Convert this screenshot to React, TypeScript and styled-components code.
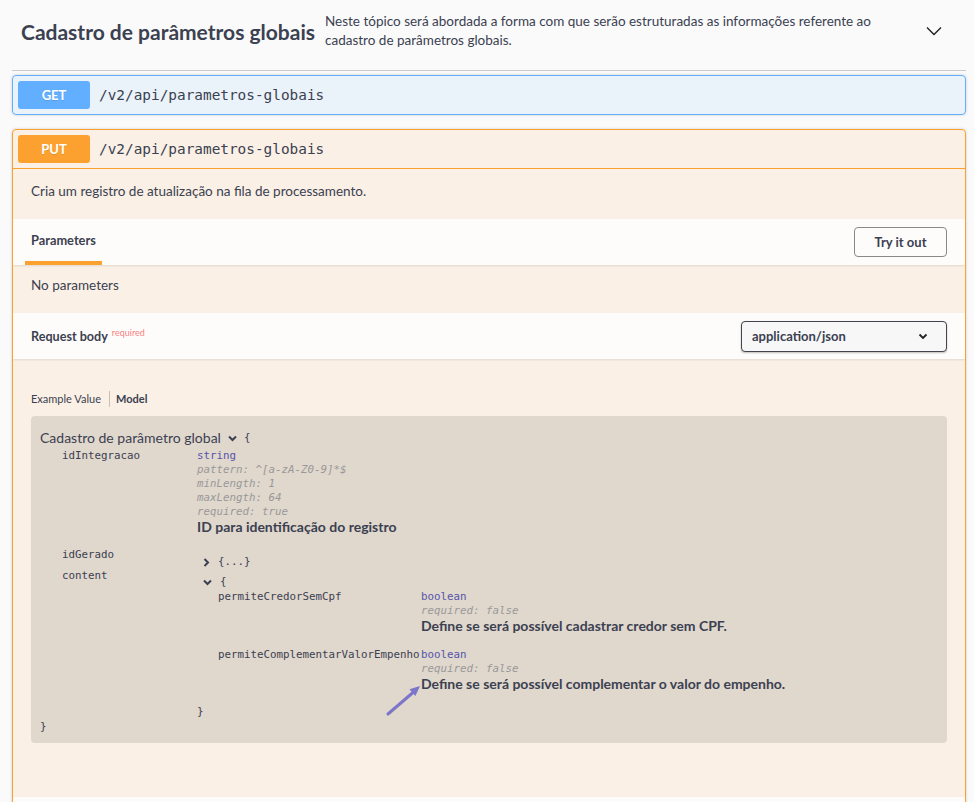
import styled, { createGlobalStyle } from 'styled-components';

const ui = `Lato, 'Noto Sans', sans-serif`;
const mono = `'DejaVu Sans Mono', 'Liberation Mono', monospace`;

const GlobalStyle = createGlobalStyle`
  body {
    margin: 0;
    background: #fafafa;
    font-family: ${ui};
    color: #3b4151;
  }
`;

const Page = styled.div`
  padding: 0 8px 0 12px;
`;

const TagHeader = styled.div`
  display: flex;
  align-items: center;
  height: 71px;
  box-sizing: border-box;
  padding: 0 24px 8px 9px;
  border-bottom: 1px solid rgba(59, 65, 81, 0.25);
`;

const TagTitle = styled.h3`
  margin: 0;
  font-size: 21px;
  font-weight: 700;
  white-space: nowrap;
`;

const TagDescription = styled.p`
  margin: 0 0 0 10px;
  flex: 1;
  font-size: 13.5px;
  line-height: 19px;
  max-width: 580px;
`;

const ExpandIcon = styled.svg`
  margin-left: auto;
  width: 16px;
  height: 10px;
`;

const OpBlock = styled.div<{ $color: string; $bg: string; $gap: number }>`
  margin-top: ${(p) => p.$gap}px;
  border: 1px solid ${(p) => p.$color};
  border-radius: 4px;
  background: ${(p) => p.$bg};
  box-shadow: 0 0 3px rgba(0, 0, 0, 0.19);
  overflow: hidden;
`;

const OpSummary = styled.div<{ $line?: string }>`
  display: flex;
  align-items: center;
  gap: 9px;
  padding: 5px;
  border-bottom: ${(p) => (p.$line ? `1px solid ${p.$line}` : 'none')};
`;

const MethodBadge = styled.span<{ $color: string }>`
  display: flex;
  align-items: center;
  justify-content: center;
  width: 72px;
  height: 28px;
  border-radius: 3px;
  background: ${(p) => p.$color};
  color: #fff;
  font-size: 13px;
  font-weight: 700;
  text-shadow: 0 1px 0 rgba(0, 0, 0, 0.1);
`;

const OpPath = styled.span`
  font-family: ${mono};
  font-size: 14.4px;
  color: #3b4151;
`;

const OpDescription = styled.p`
  margin: 0;
  padding: 12px 18px 18px;
  font-size: 13.5px;
  line-height: 20px;
`;

const SectionHeader = styled.div`
  display: flex;
  align-items: center;
  height: 46px;
  box-sizing: border-box;
  padding: 0 18px 0 12px;
  background: rgba(255, 255, 255, 0.8);
  box-shadow: 0 1px 2px rgba(0, 0, 0, 0.1);
`;

const SectionTab = styled.div`
  align-self: stretch;
  display: flex;
  align-items: center;
  padding: 0 6px;
  border-bottom: 4px solid #fca130;
  box-sizing: border-box;
  font-size: 12.8px;
  font-weight: 700;
`;

const SectionLabel = styled.div`
  padding-left: 6px;
  font-size: 12.6px;
  font-weight: 700;
`;

const Required = styled.sup`
  margin-left: 4px;
  font-size: 9px;
  font-weight: 400;
  color: rgba(249, 62, 62, 0.7);
`;

const TryButton = styled.button`
  margin-left: auto;
  width: 93px;
  height: 30px;
  border: 1px solid #888;
  border-radius: 4px;
  background: transparent;
  font-family: ${ui};
  font-size: 13px;
  font-weight: 700;
  color: #3b4151;
`;

const SelectBox = styled.div`
  margin-left: auto;
  display: flex;
  align-items: center;
  width: 206px;
  height: 31px;
  box-sizing: border-box;
  padding: 0 18px 0 10px;
  border: 1px solid #41444e;
  border-radius: 4px;
  background: #f7f7f7;
  box-shadow: 0 1px 2px rgba(0, 0, 0, 0.25);
  font-size: 13px;
  font-weight: 700;

  svg {
    margin-left: auto;
  }
`;

const Plain = styled.p`
  margin: 0;
  padding: 10px 18px 18px;
  font-size: 13.5px;
  line-height: 20px;
`;

const BodyArea = styled.div`
  padding: 32px 18px 54px;
`;

const ModelTabs = styled.div`
  display: flex;
  align-items: center;
  font-size: 11px;
  line-height: 16px;
  margin-bottom: 9px;
`;

const ModelTab = styled.span<{ $active?: boolean; $divider?: boolean }>`
  padding: 0 ${(p) => (p.$divider ? 0 : 8)}px 0 ${(p) => (p.$divider ? 6 : 0)}px;
  border-left: ${(p) => (p.$divider ? '1px solid rgba(0, 0, 0, 0.2)' : 'none')};
  font-weight: ${(p) => (p.$active ? 700 : 400)};
`;

const ModelBox = styled.div`
  position: relative;
  padding: 13px 9px 9px;
  border-radius: 4px;
  background: rgba(0, 0, 0, 0.1);
`;

const ModelTitle = styled.div`
  display: flex;
  align-items: center;
  gap: 7px;
  font-size: 14px;
  line-height: 18px;
`;

const Line = styled.div<{ $tone?: 'type' | 'meta' }>`
  font-family: ${mono};
  font-size: 10.8px;
  line-height: 14px;
  white-space: nowrap;
  color: ${(p) => (p.$tone === 'type' ? '#55a' : p.$tone === 'meta' ? '#999' : '#3b4151')};
  font-style: ${(p) => (p.$tone === 'meta' ? 'italic' : 'normal')};
`;

const Desc = styled.div`
  font-size: 14px;
  font-weight: 700;
  line-height: 16px;
  white-space: nowrap;
`;

const PropRow = styled.div<{ $nameWidth: number; $gap: number }>`
  display: grid;
  grid-template-columns: ${(p) => p.$nameWidth}px 1fr;
  margin-top: ${(p) => p.$gap}px;
`;

const PropList = styled.div<{ $indent: number }>`
  padding-left: ${(p) => p.$indent}px;
`;

const Toggle = styled.div<{ $top: number }>`
  display: flex;
  align-items: center;
  gap: 8px;
  padding: ${(p) => p.$top}px 0 0 6px;
`;

const Brace = styled(Line)<{ $gap: number }>`
  margin-top: ${(p) => p.$gap}px;
`;

const Arrow = styled.svg`
  position: absolute;
  left: 352px;
  top: 264px;
  width: 44px;
  height: 40px;
`;

function Chevron({ dir }: { dir: 'down' | 'right' }) {
  return dir === 'down' ? (
    <svg width="9" height="7" viewBox="0 0 9 7">
      <polyline points="1,1.5 4.5,5 8,1.5" fill="none" stroke="#3b4151" strokeWidth="2" />
    </svg>
  ) : (
    <svg width="7" height="9" viewBox="0 0 7 9">
      <polyline points="1.5,1 5,4.5 1.5,8" fill="none" stroke="#3b4151" strokeWidth="2" />
    </svg>
  );
}

type Prop = { name: string; type: string; meta: string[]; desc: string };

function PropValue({ type, meta, desc }: Omit<Prop, 'name'>) {
  return (
    <div>
      <Line $tone="type">{type}</Line>
      {meta.map((m) => (
        <Line key={m} $tone="meta">
          {m}
        </Line>
      ))}
      <Desc>{desc}</Desc>
    </div>
  );
}

const nested: Prop[] = [
  {
    name: 'permiteCredorSemCpf',
    type: 'boolean',
    meta: ['required: false'],
    desc: 'Define se será possível cadastrar credor sem CPF.',
  },
  {
    name: 'permiteComplementarValorEmpenho',
    type: 'boolean',
    meta: ['required: false'],
    desc: 'Define se será possível complementar o valor do empenho.',
  },
];

function Model() {
  return (
    <ModelBox>
      <ModelTitle>
        Cadastro de parâmetro global
        <Chevron dir="down" />
        <Line>{'{'}</Line>
      </ModelTitle>
      <PropList $indent={22}>
        <PropRow $nameWidth={135} $gap={2}>
          <Line>idIntegracao</Line>
          <PropValue
            type="string"
            meta={['pattern: ^[a-zA-Z0-9]*$', 'minLength: 1', 'maxLength: 64', 'required: true']}
            desc="ID para identificação do registro"
          />
        </PropRow>
        <PropRow $nameWidth={135} $gap={13}>
          <Line>idGerado</Line>
          <Toggle $top={7}>
            <Chevron dir="right" />
            <Line>{'{...}'}</Line>
          </Toggle>
        </PropRow>
        <PropRow $nameWidth={135} $gap={0}>
          <Line>content</Line>
          <div>
            <Toggle $top={6}>
              <Chevron dir="down" />
              <Line>{'{'}</Line>
            </Toggle>
            <PropList $indent={21}>
              {nested.map((p, i) => (
                <PropRow key={p.name} $nameWidth={203} $gap={i === 0 ? 1 : 14}>
                  <Line>{p.name}</Line>
                  <PropValue type={p.type} meta={p.meta} desc={p.desc} />
                </PropRow>
              ))}
            </PropList>
            <Brace $gap={13}>{'}'}</Brace>
          </div>
        </PropRow>
      </PropList>
      <Brace $gap={1}>{'}'}</Brace>
      <Arrow viewBox="0 0 44 40">
        <line x1="5" y1="34" x2="30" y2="12.5" stroke="#7b76c9" strokeWidth="3" strokeLinecap="round" />
        <polygon points="37,6 32.4,16 26.5,9.2" fill="#7b76c9" />
      </Arrow>
    </ModelBox>
  );
}

export default function App() {
  return (
    <Page>
      <GlobalStyle />
      <TagHeader>
        <TagTitle>Cadastro de parâmetros globais</TagTitle>
        <TagDescription>
          Neste tópico será abordada a forma com que serão estruturadas as informações referente ao
          cadastro de parâmetros globais.
        </TagDescription>
        <ExpandIcon viewBox="0 0 16 10">
          <polyline points="1,1.5 8,8.5 15,1.5" fill="none" stroke="#222" strokeWidth="1.4" />
        </ExpandIcon>
      </TagHeader>

      <OpBlock $color="#61affe" $bg="rgba(97, 175, 254, 0.1)" $gap={4}>
        <OpSummary>
          <MethodBadge $color="#61affe">GET</MethodBadge>
          <OpPath>/v2/api/parametros-globais</OpPath>
        </OpSummary>
      </OpBlock>

      <OpBlock $color="#fca130" $bg="rgba(252, 161, 48, 0.1)" $gap={14}>
        <OpSummary $line="#fca130">
          <MethodBadge $color="#fca130">PUT</MethodBadge>
          <OpPath>/v2/api/parametros-globais</OpPath>
        </OpSummary>
        <OpDescription>Cria um registro de atualização na fila de processamento.</OpDescription>
        <SectionHeader>
          <SectionTab>Parameters</SectionTab>
          <TryButton>Try it out</TryButton>
        </SectionHeader>
        <Plain>No parameters</Plain>
        <SectionHeader>
          <SectionLabel>
            Request body<Required>required</Required>
          </SectionLabel>
          <SelectBox>
            application/json
            <svg width="10" height="7" viewBox="0 0 10 7">
              <polyline points="1.5,1.5 5,5 8.5,1.5" fill="none" stroke="#222" strokeWidth="1.8" />
            </svg>
          </SelectBox>
        </SectionHeader>
        <BodyArea>
          <ModelTabs>
            <ModelTab>Example Value</ModelTab>
            <ModelTab $active $divider>
              Model
            </ModelTab>
          </ModelTabs>
          <Model />
        </BodyArea>
        <SectionHeader />
      </OpBlock>
    </Page>
  );
}
